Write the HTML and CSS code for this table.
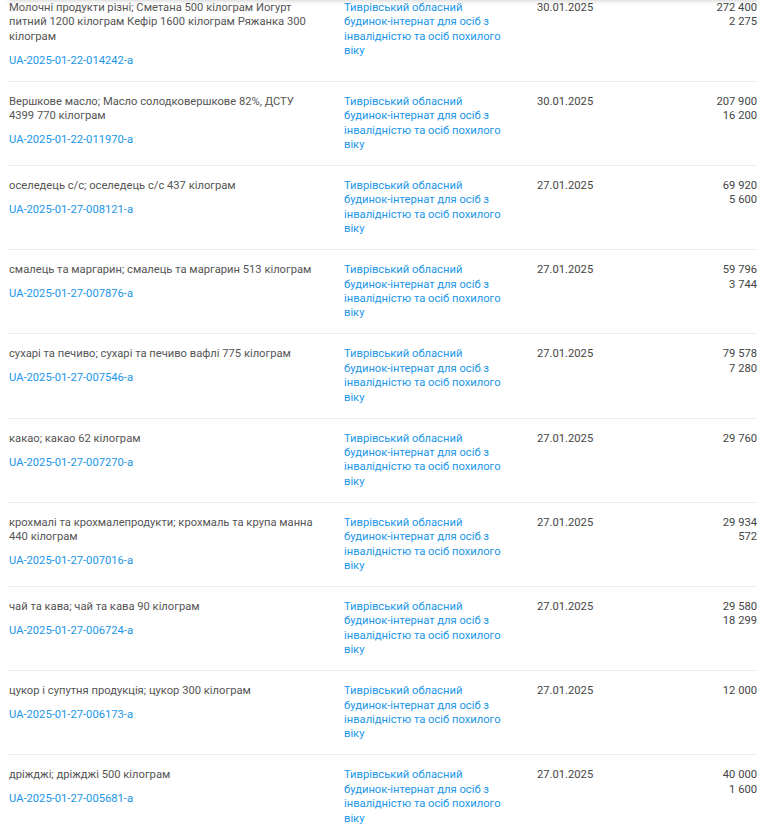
FILE: index.html
```html
<!DOCTYPE html>
<html lang="uk">
<head>
<meta charset="utf-8">
<link rel="stylesheet" href="styles.css">
</head>
<body>
<div class="header-shadow"></div>
<div class="list">
  <div class="row">
    <div class="desc"><div>Молочні продукти різні; Сметана 500 кілограм Иогурт питний 1200 кілограм Кефір 1600 кілограм Ряжанка 300 кілограм</div><a class="code">UA-2025-01-22-014242-a</a></div>
    <a class="org">Тиврівський обласний будинок-інтернат для осіб з інвалідністю та осіб похилого віку</a>
    <div class="date">30.01.2025</div>
    <div class="sum"><div>272 400</div><div>2 275</div></div>
  </div>
  <div class="row">
    <div class="desc"><div>Вершкове масло; Масло солодковершкове 82%, ДСТУ 4399 770 кілограм</div><a class="code">UA-2025-01-22-011970-a</a></div>
    <a class="org">Тиврівський обласний будинок-інтернат для осіб з інвалідністю та осіб похилого віку</a>
    <div class="date">30.01.2025</div>
    <div class="sum"><div>207 900</div><div>16 200</div></div>
  </div>
  <div class="row">
    <div class="desc"><div>оселедець с/с; оселедець с/с 437 кілограм</div><a class="code">UA-2025-01-27-008121-a</a></div>
    <a class="org">Тиврівський обласний будинок-інтернат для осіб з інвалідністю та осіб похилого віку</a>
    <div class="date">27.01.2025</div>
    <div class="sum"><div>69 920</div><div>5 600</div></div>
  </div>
  <div class="row">
    <div class="desc"><div>смалець та маргарин; смалець та маргарин 513 кілограм</div><a class="code">UA-2025-01-27-007876-a</a></div>
    <a class="org">Тиврівський обласний будинок-інтернат для осіб з інвалідністю та осіб похилого віку</a>
    <div class="date">27.01.2025</div>
    <div class="sum"><div>59 796</div><div>3 744</div></div>
  </div>
  <div class="row">
    <div class="desc"><div>сухарі та печиво; сухарі та печиво вафлі 775 кілограм</div><a class="code">UA-2025-01-27-007546-a</a></div>
    <a class="org">Тиврівський обласний будинок-інтернат для осіб з інвалідністю та осіб похилого віку</a>
    <div class="date">27.01.2025</div>
    <div class="sum"><div>79 578</div><div>7 280</div></div>
  </div>
  <div class="row">
    <div class="desc"><div>какао; какао 62 кілограм</div><a class="code">UA-2025-01-27-007270-a</a></div>
    <a class="org">Тиврівський обласний будинок-інтернат для осіб з інвалідністю та осіб похилого віку</a>
    <div class="date">27.01.2025</div>
    <div class="sum"><div>29 760</div></div>
  </div>
  <div class="row">
    <div class="desc"><div>крохмалі та крохмалепродукти; крохмаль та крупа манна 440 кілограм</div><a class="code">UA-2025-01-27-007016-a</a></div>
    <a class="org">Тиврівський обласний будинок-інтернат для осіб з інвалідністю та осіб похилого віку</a>
    <div class="date">27.01.2025</div>
    <div class="sum"><div>29 934</div><div>572</div></div>
  </div>
  <div class="row">
    <div class="desc"><div>чай та кава; чай та кава 90 кілограм</div><a class="code">UA-2025-01-27-006724-a</a></div>
    <a class="org">Тиврівський обласний будинок-інтернат для осіб з інвалідністю та осіб похилого віку</a>
    <div class="date">27.01.2025</div>
    <div class="sum"><div>29 580</div><div>18 299</div></div>
  </div>
  <div class="row">
    <div class="desc"><div>цукор і супутня продукція; цукор 300 кілограм</div><a class="code">UA-2025-01-27-006173-a</a></div>
    <a class="org">Тиврівський обласний будинок-інтернат для осіб з інвалідністю та осіб похилого віку</a>
    <div class="date">27.01.2025</div>
    <div class="sum"><div>12 000</div></div>
  </div>
  <div class="row">
    <div class="desc"><div>дріжджі; дріжджі 500 кілограм</div><a class="code">UA-2025-01-27-005681-a</a></div>
    <a class="org">Тиврівський обласний будинок-інтернат для осіб з інвалідністю та осіб похилого віку</a>
    <div class="date">27.01.2025</div>
    <div class="sum"><div>40 000</div><div>1 600</div></div>
  </div>
</div>
</body>
</html>
```

FILE: styles.css
```css
html, body {
  margin: 0;
  padding: 0;
  background: #fff;
  overflow: hidden;
}
body {
  font-family: Roboto, "Noto Sans", sans-serif;
  font-size: 11.2px;
  line-height: 14.4px;
  color: #555;
}
.header-shadow {
  position: absolute;
  top: -6px;
  left: 9px;
  right: 10px;
  height: 6px;
  box-shadow: 0 1px 5px rgba(0, 0, 0, 0.18);
  background: #fff;
  z-index: 2;
}
.list {
  margin: -12px 11px 0 9px;
}
.row {
  display: grid;
  grid-template-columns: 309px 167px 1fr auto;
  column-gap: 26px;
  padding: 13px 0 12.6px;
  border-bottom: 1px solid #ececec;
}
.desc {
  display: flex;
  flex-direction: column;
  gap: 9.5px;
}
.code, .org {
  color: #2196e8;
  text-decoration: none;
}
.date {
  color: #444;
}
.sum {
  color: #444;
  text-align: right;
}
```
